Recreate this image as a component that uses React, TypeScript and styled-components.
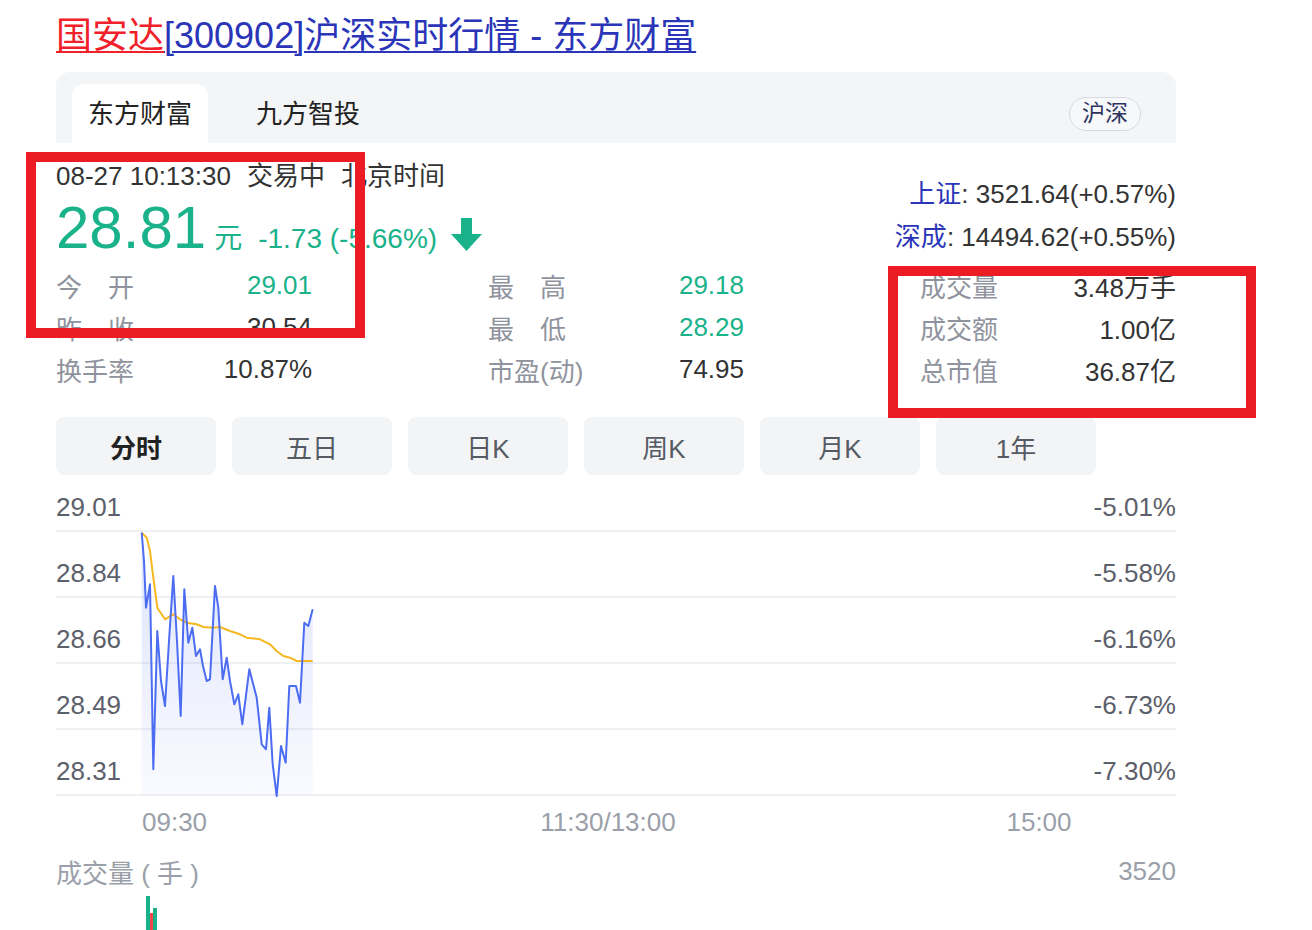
import React from "react";
import styled, { createGlobalStyle } from "styled-components";

const GREEN = "#1ab28a";
const LINK = "#2a35b8";
const FONT = `"Liberation Sans", Arial, "Noto Sans CJK SC", sans-serif`;

const GlobalStyle = createGlobalStyle`
  *, *::before, *::after { box-sizing: border-box; }
  body {
    margin: 0;
    background: #fff;
    font-family: ${FONT};
    color: #333;
  }
`;

// price points read off the intraday line (page coords), shifted into chart coords below
const pricePts: [number, number][] = [
  [141.7, 531.7], [144, 560], [146, 606.7], [150, 583.3], [153.3, 768.3], [157.3, 630],
  [161, 680], [165, 705], [169, 640], [173.3, 575], [177, 640], [180.7, 715],
  [184.3, 588.3], [188.3, 641.7], [192.3, 626.7], [196, 655], [200, 648.3], [203, 665],
  [206.7, 680], [210, 678.3], [215, 585], [218.3, 606.7], [222.7, 678.3], [226.7, 656.7],
  [230, 680], [234.3, 703.3], [238.3, 693.3], [242.3, 723.3], [249.3, 668.3],
  [256.7, 696.7], [261.7, 743.3], [266, 748.3], [269.3, 706.7], [272.7, 763.3],
  [276.7, 795], [281, 745], [285.7, 761.7], [289.3, 685], [296, 685], [300, 701.7],
  [304.3, 621.7], [308.3, 625], [312.7, 608.3],
];

const avgPts: [number, number][] = [
  [141.7, 531.7], [146.7, 536.7], [150, 550], [153.3, 576.7], [157.3, 606.7], [165, 618.3],
  [173.3, 613.3], [180, 618.3], [186.7, 621.7], [196.7, 623.3], [203.3, 626], [213.3, 626.7],
  [220, 626], [230, 630], [240, 633.3], [246.7, 636.7], [260, 638.3], [270, 643.3],
  [276.7, 650], [283.3, 655], [290, 656.7], [296.7, 660], [312.7, 660],
];

const CHART_X = 56;
const CHART_Y = 487;
const CHART_BOTTOM = 795 - CHART_Y;

const toPath = (pts: [number, number][]) =>
  pts.map(([x, y], i) => `${i ? "L" : "M"}${(x - CHART_X).toFixed(1)} ${(y - CHART_Y).toFixed(1)}`).join(" ");

const linePath = toPath(pricePts);
const areaPath =
  linePath +
  ` L${(pricePts[pricePts.length - 1][0] - CHART_X).toFixed(1)} ${CHART_BOTTOM}` +
  ` L${(pricePts[0][0] - CHART_X).toFixed(1)} ${CHART_BOTTOM} Z`;
const avgPath = toPath(avgPts);

const stats = [
  { label: "今　开", value: "29.01", green: true },
  { label: "最　高", value: "29.18", green: true },
  { label: "成交量", value: "3.48万手" },
  { label: "昨　收", value: "30.54" },
  { label: "最　低", value: "28.29", green: true },
  { label: "成交额", value: "1.00亿" },
  { label: "换手率", value: "10.87%" },
  { label: "市盈(动)", value: "74.95" },
  { label: "总市值", value: "36.87亿" },
];

const periods = ["分时", "五日", "日K", "周K", "月K", "1年"];

const gridRows = [
  { left: "29.01", right: "-5.01%" },
  { left: "28.84", right: "-5.58%" },
  { left: "28.66", right: "-6.16%" },
  { left: "28.49", right: "-6.73%" },
  { left: "28.31", right: "-7.30%" },
];

const ticks = [
  { label: "09:30", left: 86, center: false },
  { label: "11:30/13:00", left: 552, center: true },
  { label: "15:00", left: 983, center: true },
];

const Page = styled.div`
  position: relative;
  width: 1176px;
  padding: 14px 0 0 56px;
  height: 930px;
  overflow: hidden;
`;

const Title = styled.h3`
  margin: 0 0 14px;
  font-weight: normal;
  font-size: 36px;
  line-height: 44px;
  white-space: nowrap;
`;

const TitlePart = styled.span<{ $red?: boolean }>`
  color: ${(p) => (p.$red ? "#f0212a" : LINK)};
  text-decoration: underline;
  text-underline-offset: 3px;
  text-decoration-thickness: 2px;
`;

const SourceBar = styled.div`
  display: flex;
  align-items: flex-end;
  height: 71px;
  padding: 0 35px 0 16px;
  background: #f4f5f7;
  border-radius: 14px 14px 0 0;
`;

const SourceTab = styled.div<{ $active?: boolean }>`
  height: 59px;
  padding: 0 16px 4px;
  margin-right: 32px;
  display: flex;
  align-items: center;
  font-size: 26px;
  color: #222;
  background: ${(p) => (p.$active ? "#fff" : "transparent")};
  border-radius: 12px 12px 0 0;
`;

const MarketBadge = styled.div`
  margin-left: auto;
  align-self: center;
  margin-top: 12px;
  height: 34px;
  padding: 0 12px;
  border: 1.5px solid #d6d9df;
  border-radius: 18px;
  font-size: 23px;
  line-height: 31px;
  color: #2f3560;
  background: #f7f8fa;
`;

const Quote = styled.div`
  display: flex;
  justify-content: space-between;
  padding-top: 16px;
`;

const QuoteMain = styled.div`
  display: flex;
  flex-direction: column;
  gap: 5px;
`;

const StatusLine = styled.div`
  display: flex;
  gap: 16px;
  font-size: 26px;
  line-height: 34px;
  color: #333;
`;

const PriceLine = styled.div`
  display: flex;
  align-items: baseline;
  height: 60px;
  color: ${GREEN};
`;

const Price = styled.span`
  font-size: 60px;
  line-height: 60px;
`;

const Unit = styled.span`
  font-size: 28px;
  margin-left: 8px;
`;

const Change = styled.span`
  font-size: 28px;
  margin-left: 16px;
`;

const DownArrow = styled.svg`
  width: 31px;
  height: 34px;
  margin-left: 14px;
  align-self: center;
  margin-top: 14px;
`;

const IndexList = styled.div`
  margin-top: 14px;
  display: flex;
  flex-direction: column;
  align-items: flex-end;
  font-size: 26px;
  line-height: 43px;
  color: #333;
`;

const IndexName = styled.span`
  color: ${LINK};
`;

const StatsGrid = styled.div`
  margin-top: 5px;
  display: grid;
  grid-template-columns: repeat(3, 256px);
  justify-content: space-between;
  grid-auto-rows: 42px;
`;

const Stat = styled.div`
  display: flex;
  align-items: center;
  justify-content: space-between;
  font-size: 26px;
`;

const StatLabel = styled.span`
  color: #8f939d;
`;

const StatValue = styled.span<{ $green?: boolean }>`
  color: ${(p) => (p.$green ? GREEN : "#333")};
`;

const PeriodTabs = styled.div`
  margin-top: 27px;
  display: flex;
  gap: 16px;
`;

const PeriodTab = styled.div<{ $active?: boolean }>`
  width: 160px;
  height: 58px;
  display: flex;
  align-items: center;
  justify-content: center;
  background: #f3f4f6;
  border-radius: 8px;
  font-size: 26px;
  font-weight: ${(p) => (p.$active ? "bold" : "normal")};
  color: ${(p) => (p.$active ? "#222" : "#555a63")};
`;

const Chart = styled.div`
  position: relative;
  margin-top: 13px;
`;

const GridRow = styled.div<{ $first?: boolean }>`
  height: ${(p) => (p.$first ? 44 : 66)}px;
  display: flex;
  justify-content: space-between;
  align-items: flex-end;
  padding-bottom: 8px;
  border-bottom: 2px solid #eff0f3;
  font-size: 26px;
  line-height: 30px;
  color: #5c606b;
`;

const ChartSvg = styled.svg`
  position: absolute;
  left: 0;
  top: 0;
  width: 1120px;
  height: 310px;
  overflow: visible;
`;

const TimeAxis = styled.div`
  position: relative;
  height: 52px;
  font-size: 26px;
  color: #9a9fa9;
`;

const Tick = styled.span<{ $center?: boolean }>`
  position: absolute;
  top: 11px;
  line-height: 30px;
  white-space: nowrap;
  transform: ${(p) => (p.$center ? "translateX(-50%)" : "none")};
`;

const VolumeHeader = styled.div`
  display: flex;
  justify-content: space-between;
  height: 46px;
  align-items: center;
  font-size: 26px;
  color: #9a9fa9;
`;

const VolumeSvg = styled.svg`
  display: block;
  width: 1120px;
  height: 60px;
  margin-top: 2px;
`;

const Highlight = styled.div`
  position: absolute;
  border: 10px solid #ec1c24;
  pointer-events: none;
`;

export default function App() {
  return (
    <>
      <GlobalStyle />
      <Page>
        <Title>
          <TitlePart $red>国安达</TitlePart>
          <TitlePart>[300902]沪深实时行情 - 东方财富</TitlePart>
        </Title>

        <SourceBar>
          <SourceTab $active>东方财富</SourceTab>
          <SourceTab>九方智投</SourceTab>
          <MarketBadge>沪深</MarketBadge>
        </SourceBar>

        <Quote>
          <QuoteMain>
            <StatusLine>
              <span>08-27 10:13:30</span>
              <span>交易中</span>
              <span>北京时间</span>
            </StatusLine>
            <PriceLine>
              <Price>28.81</Price>
              <Unit>元</Unit>
              <Change>-1.73 (-5.66%)</Change>
              <DownArrow viewBox="0 0 31 34">
                <rect x="10" y="0" width="11" height="17" fill={GREEN} />
                <path d="M0 16 L31 16 L15.5 33 Z" fill={GREEN} />
              </DownArrow>
            </PriceLine>
          </QuoteMain>
          <IndexList>
            <div>
              <IndexName>上证</IndexName>: 3521.64(+0.57%)
            </div>
            <div>
              <IndexName>深成</IndexName>: 14494.62(+0.55%)
            </div>
          </IndexList>
        </Quote>

        <StatsGrid>
          {stats.map((s) => (
            <Stat key={s.label}>
              <StatLabel>{s.label}</StatLabel>
              <StatValue $green={s.green}>{s.value}</StatValue>
            </Stat>
          ))}
        </StatsGrid>

        <PeriodTabs>
          {periods.map((p, i) => (
            <PeriodTab key={p} $active={i === 0}>
              {p}
            </PeriodTab>
          ))}
        </PeriodTabs>

        <Chart>
          {gridRows.map((r, i) => (
            <GridRow key={r.left} $first={i === 0}>
              <span>{r.left}</span>
              <span>{r.right}</span>
            </GridRow>
          ))}
          <ChartSvg viewBox="0 0 1120 310">
            <defs>
              <linearGradient id="fillBlue" x1="0" y1="0" x2="0" y2="1">
                <stop offset="0" stopColor="#5675f2" stopOpacity="0.2" />
                <stop offset="1" stopColor="#5675f2" stopOpacity="0.03" />
              </linearGradient>
            </defs>
            <path d={areaPath} fill="url(#fillBlue)" />
            <path d={avgPath} fill="none" stroke="#f5b820" strokeWidth="2" strokeLinejoin="round" />
            <path d={linePath} fill="none" stroke="#4c6cf2" strokeWidth="2" strokeLinejoin="round" />
          </ChartSvg>
        </Chart>

        <TimeAxis>
          {ticks.map((t) => (
            <Tick key={t.label} $center={t.center} style={{ left: t.left }}>
              {t.label}
            </Tick>
          ))}
        </TimeAxis>

        <VolumeHeader>
          <span>成交量 ( 手 )</span>
          <span>3520</span>
        </VolumeHeader>

        <VolumeSvg viewBox="0 0 1120 60">
          <rect x="90" y="0" width="4" height="60" fill={GREEN} />
          <rect x="94" y="17" width="3" height="43" fill="#f04848" />
          <rect x="97" y="12" width="4" height="48" fill={GREEN} />
        </VolumeSvg>
      </Page>

      <Highlight style={{ left: 26, top: 152, width: 339, height: 186 }} />
      <Highlight style={{ left: 888, top: 266, width: 368, height: 152 }} />
    </>
  );
}
